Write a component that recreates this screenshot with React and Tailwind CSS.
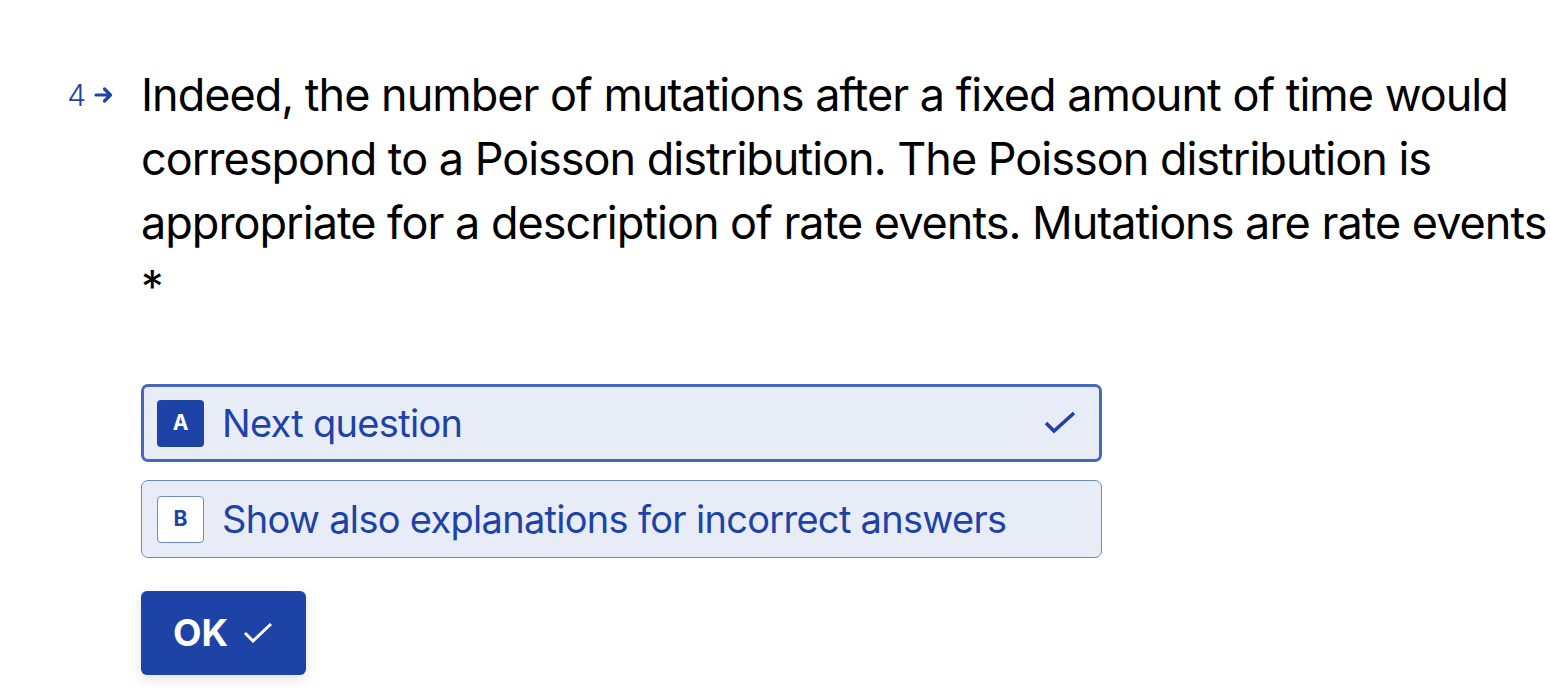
export default function App() {
  return (
    <div className="w-[1550px] h-[690px] bg-white overflow-hidden" style={{ fontFamily: "Inter, 'Noto Sans', sans-serif" }}>
      <div className="flex pt-[63px]">
        <div className="w-[141px] shrink-0 flex justify-end pr-[27px]">
          <div className="flex items-center gap-[8px] h-[64px] text-[#1e43a6]">
            <span className="text-[30px] leading-none font-light">4</span>
            <svg width="20" height="18" viewBox="0 0 20 18" fill="none">
              <path d="M2 9h14M10.5 3L16.5 9l-6 6" stroke="currentColor" strokeWidth="3.2" strokeLinecap="round" strokeLinejoin="round" />
            </svg>
          </div>
        </div>
        <div className="w-[1409px] shrink-0">
          <div className="text-[45px] leading-[64px] text-black tracking-[-1px]">
            Indeed, the number of mutations after a fixed amount of time would correspond to a Poisson distribution. The Poisson distribution is appropriate for a description of rate events. Mutations are rate events
          </div>
          <div className="text-[45px] leading-[64px] text-black">*</div>
          <div className="mt-[65px] w-[961px] flex flex-col gap-[18px]">
            <div className="h-[78px] rounded-[7px] border-[3px] border-[#4766bd] bg-[#e8ecf6] flex items-center pl-[13px] pr-[22px]">
              <div className="w-[47px] h-[47px] rounded-[4px] bg-[#1e43a6] text-white flex items-center justify-center text-[21px] font-bold">A</div>
              <div className="ml-[18px] text-[38px] tracking-[-0.7px] text-[#1e43a6] flex-1">Next question</div>
              <svg width="34" height="24" viewBox="0 0 34 24" fill="none">
                <path d="M3 12l8 8L31 2" stroke="#1e43a6" strokeWidth="3.6" strokeLinecap="butt" strokeLinejoin="miter" />
              </svg>
            </div>
            <div className="h-[78px] rounded-[7px] border-[1.5px] border-[#6f88cc] bg-[#e8ecf6] flex items-center pl-[15px] pr-[22px]">
              <div className="w-[47px] h-[47px] rounded-[4px] bg-white border-[1.5px] border-[#6f88cc] text-[#1e43a6] flex items-center justify-center text-[21px] font-bold">B</div>
              <div className="ml-[18px] text-[38px] tracking-[-0.7px] text-[#1e43a6] flex-1">Show also explanations for incorrect answers</div>
            </div>
          </div>
          <button className="mt-[33px] w-[165px] h-[84px] rounded-[6px] bg-[#1e43a6] text-white flex items-center justify-center gap-[14px] shadow-[0_4px_14px_rgba(0,0,0,0.12)]">
            <span className="text-[37px] font-bold">OK</span>
            <svg width="32" height="24" viewBox="0 0 32 24" fill="none">
              <path d="M3 12l8 8L29 3" stroke="white" strokeWidth="3" />
            </svg>
          </button>
        </div>
      </div>
    </div>
  );
}
